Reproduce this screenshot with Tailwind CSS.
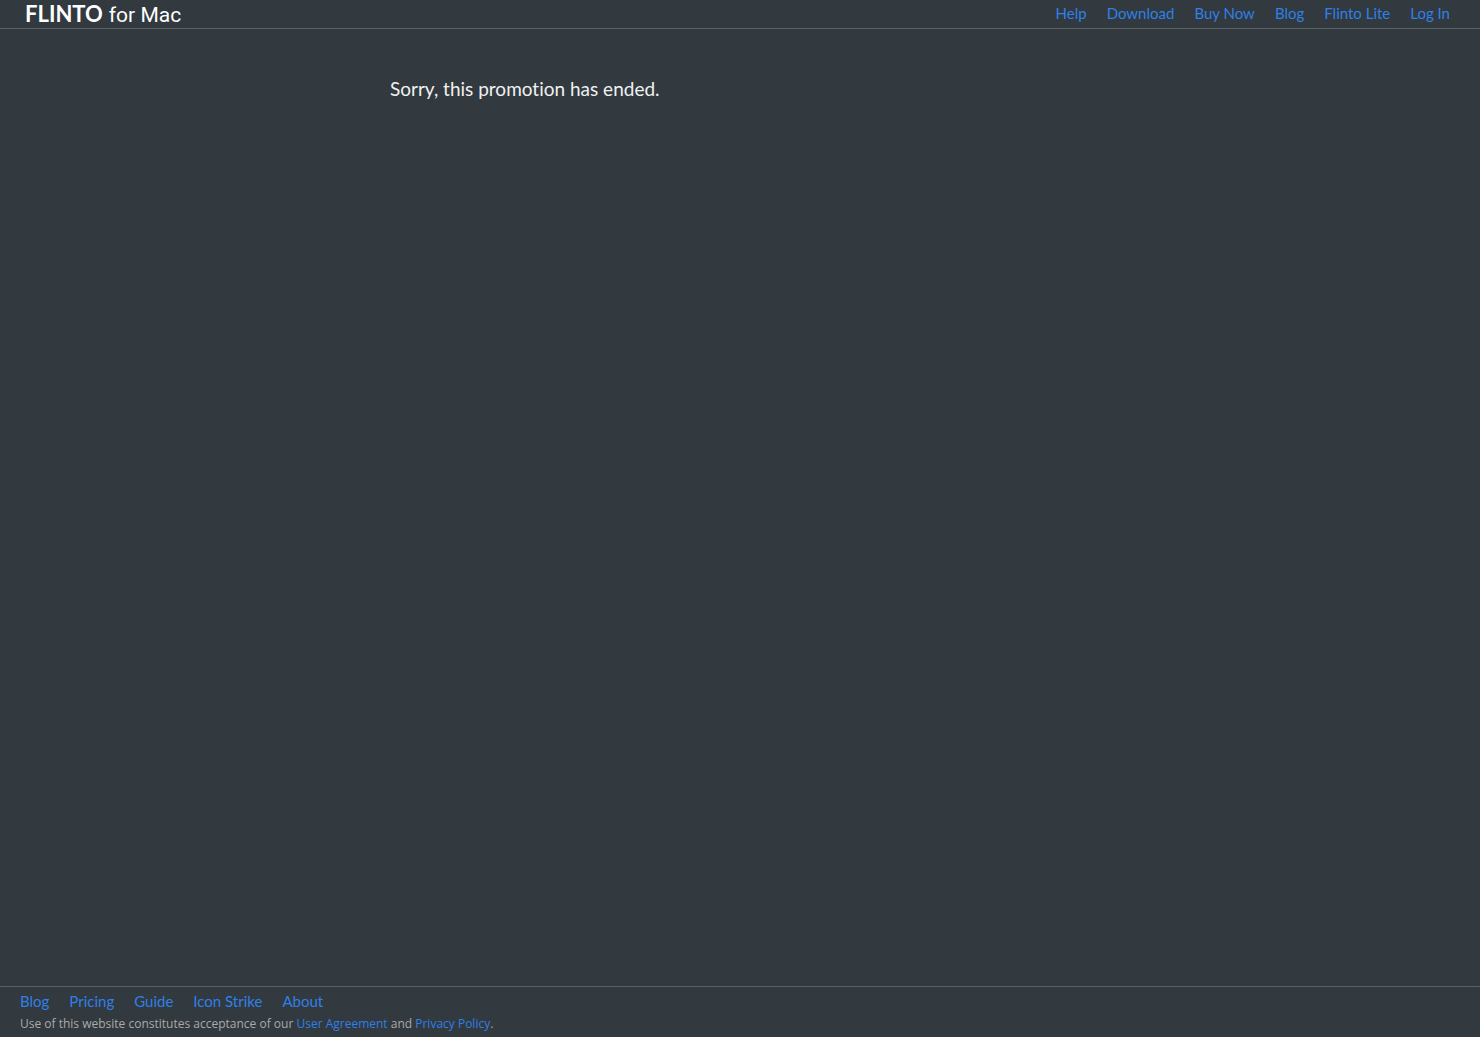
<!DOCTYPE html>
<html lang="en"><head><meta charset="utf-8"><meta name="viewport" content="width=device-width, initial-scale=1"><title>Flinto for Mac</title>
<script src="https://cdn.jsdelivr.net/npm/@tailwindcss/browser@4"></script></head>
<body class="min-h-screen flex flex-col bg-[#32393f] text-white font-['Lato',sans-serif] [font-variant-ligatures:none]">
<header class="flex items-start justify-between pl-[25px] pr-[30px] border-b border-[#5a6268]">
<a href="#" class="flex items-baseline h-7 gap-[6px] text-[22px] leading-7"><span class="font-bold">FLINTO</span><span class="font-['Roboto',sans-serif] text-[21px]">for Mac</span></a>
<nav class="flex gap-5 text-[15px] leading-[26px] text-[#2f80e7]"><a href="#">Help</a><a href="#">Download</a><a href="#">Buy Now</a><a href="#">Blog</a><a href="#">Flinto Lite</a><a href="#">Log In</a></nav>
</header>
<main class="flex-1 w-full max-w-[700px] mx-auto pt-[46px]"><p class="text-[19px] leading-7 text-[#f0f1f1]">Sorry, this promotion has ended.</p></main>
<footer class="border-t border-[#5a6268] px-5 pb-[5px]">
<nav class="flex gap-5 text-[15px] leading-7 text-[#2f80e7]"><a href="#">Blog</a><a href="#">Pricing</a><a href="#">Guide</a><a href="#">Icon Strike</a><a href="#">About</a></nav>
<p class="text-[12px] leading-[17px] font-['Open_Sans',sans-serif] text-[#aaaaaa]">Use of this website constitutes acceptance of our <a href="#" class="text-[#2f80e7]">User Agreement</a> and <a href="#" class="text-[#2f80e7]">Privacy Policy</a>.</p>
</footer></body></html>
